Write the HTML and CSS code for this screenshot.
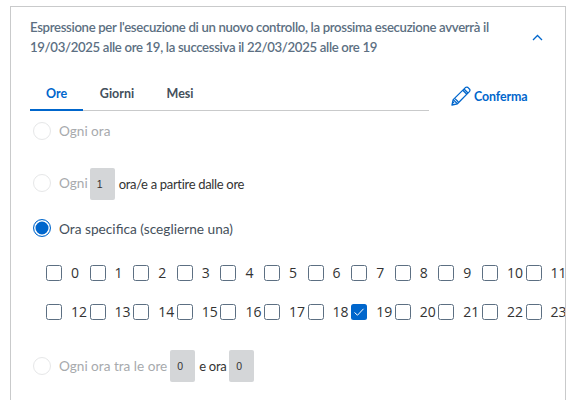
FILE: index.html
```html
<!DOCTYPE html>
<html lang="it">
<head>
<meta charset="utf-8">
<title>Espressione</title>
<link rel="stylesheet" href="styles.css">
</head>
<body>
<section class="card">
  <header class="head">
    <p class="desc">Espressione per l'esecuzione di un nuovo controllo, la prossima esecuzione avverrà il 19/03/2025 alle ore 19, la successiva il 22/03/2025 alle ore 19</p>
    <svg class="chev" width="11" height="7" viewBox="0 0 11 7"><path d="M1 6 L5.5 1.5 L10 6" fill="none" stroke="#0066cc" stroke-width="1.3"/></svg>
  </header>
  <div class="tabrow">
    <nav class="tabs">
      <a class="tab active">Ore</a>
      <a class="tab">Giorni</a>
      <a class="tab last">Mesi</a>
    </nav>
    <button class="confirm">
      <svg width="20" height="20" viewBox="0 0 20 20"><g fill="none" stroke="#0066cc" stroke-width="1.3" stroke-linejoin="round"><path d="M1 19 L2.2 13.6 L14.4 1.6 Q15.6 .6 16.8 1.4 L18.6 3.2 Q19.4 4.4 18.4 5.6 L6.4 17.8 Z"/><path d="M2.2 13.6 L6.4 17.8 M4 12.6 L7.4 16 M13 3 L17 7 M11.8 4.2 L15.8 8.2 M3 17 L1.8 15.8"/></g></svg>
      <span>Conferma</span>
    </button>
  </div>
  <div class="option o1"><span class="radio"></span><span class="lbl off">Ogni ora</span></div>
  <div class="option o2"><span class="radio raised"></span><span class="lbl off raised">Ogni</span><span class="num near">1</span><span class="lbl small">ora/e a partire dalle ore</span></div>
  <div class="option o3"><span class="radio on"></span><span class="lbl sel">Ora specifica (sceglierne una)</span></div>
  <div class="hours">
    <label class="hour"><i class="box"></i><span>0</span></label>
    <label class="hour"><i class="box"></i><span>1</span></label>
    <label class="hour"><i class="box"></i><span>2</span></label>
    <label class="hour"><i class="box"></i><span>3</span></label>
    <label class="hour"><i class="box"></i><span>4</span></label>
    <label class="hour"><i class="box"></i><span>5</span></label>
    <label class="hour"><i class="box"></i><span>6</span></label>
    <label class="hour"><i class="box"></i><span>7</span></label>
    <label class="hour"><i class="box"></i><span>8</span></label>
    <label class="hour"><i class="box"></i><span>9</span></label>
    <label class="hour"><i class="box"></i><span>10</span></label>
    <label class="hour"><i class="box"></i><span>11</span></label>
    <label class="hour"><i class="box"></i><span>12</span></label>
    <label class="hour"><i class="box"></i><span>13</span></label>
    <label class="hour"><i class="box"></i><span>14</span></label>
    <label class="hour"><i class="box"></i><span>15</span></label>
    <label class="hour"><i class="box"></i><span>16</span></label>
    <label class="hour"><i class="box"></i><span>17</span></label>
    <label class="hour"><i class="box"></i><span>18</span></label>
    <label class="hour"><i class="box checked"><svg width="16" height="16" viewBox="0 0 16 16"><path d="M3.5 8.5 L6.5 11.2 L12.5 4.8" fill="none" stroke="#fff" stroke-width="1"/></svg></i><span>19</span></label>
    <label class="hour"><i class="box"></i><span>20</span></label>
    <label class="hour"><i class="box"></i><span>21</span></label>
    <label class="hour"><i class="box"></i><span>22</span></label>
    <label class="hour"><i class="box"></i><span>23</span></label>
  </div>
  <div class="option o4"><span class="radio"></span><span class="lbl off">Ogni ora tra le ore</span><span class="num">0</span><span class="lbl small">e ora</span><span class="num">0</span></div>
</section>
</body>
</html>
```
FILE: styles.css
```css
html, body { margin: 0; padding: 0; height: 400px; overflow: hidden; background: #fff; }
body { font-family: "Lato", "Noto Sans", sans-serif; }
.card {
  box-sizing: border-box;
  width: 556px;
  height: 394px;
  margin: 6px 0 0 10px;
  border: 1px solid #c9cacb;
  border-bottom: 0;
  padding: 0 0 0 19px;
  overflow: hidden;
}
.head { display: flex; align-items: center; height: 49px; padding: 5px 0 1px; }
.desc { margin: 0; width: 470px; font-size: 13.2px; font-weight: 600; line-height: 20px; color: #5c6f82; letter-spacing: -.34px; }
.chev { margin-left: 32px; margin-top: 2px; }
.tabrow { display: flex; height: 49px; padding-top: 0; }
.tabs { display: flex; width: 399px; height: 49px; box-sizing: border-box; border-bottom: 1px solid #c9cacb; align-items: flex-end; }
.tab { box-sizing: border-box; height: 27px; padding: 0; font-size: 12.5px; line-height: 20px; font-weight: 700; color: #44505c; margin-bottom: -1px; text-align: center; width: 68px; }
.tab:first-child { width: 53px; }
.tab.last { width: 58px; }
.tab.active { color: #0066cc; border-bottom: 2px solid #0066cc; }
.confirm { display: flex; align-items: center; gap: 3px; height: 32px; margin: 18px 0 0 22px; padding: 0; border: 0; background: none; font: inherit; font-size: 12.4px; font-weight: 700; letter-spacing: -.1px; color: #0066cc; }
.option { display: flex; align-items: center; margin-left: 3px; color: #333; }
.o1 { height: 20px; margin-top: 10px; }
.o2 { height: 32px; margin-top: 27px; }
.o3 { height: 20px; margin-top: 18px; }
.o4 { height: 32px; margin-top: 19px; }
.radio { box-sizing: border-box; flex: none; width: 18px; height: 18px; border-radius: 50%; border: 1px solid #e6e7e8; background: #fff; margin-right: 8px; }
.radio.on { border: 1.5px solid #0066cc; box-shadow: inset 0 0 0 1.5px #fff, inset 0 0 0 8px #0066cc; }
.raised { margin-bottom: 3px; }
.lbl { font-size: 13.6px; white-space: nowrap; }
.lbl.off { color: #a7aaad; }
.lbl.sel { color: #45505b; font-size: 13.7px; }
.lbl.small { font-size: 13px; letter-spacing: -.32px; color: #333; margin-left: 4px; }
.num { box-sizing: border-box; width: 25px; height: 32px; margin-left: 3px; padding: 0 0 0 7px; background: #d4d6d8; border-radius: 2px; font: 10.5px/32px "Liberation Sans", sans-serif; color: #333; }
.num.near { margin-left: 2px; }
.hours { display: grid; grid-template-columns: repeat(12, 43.6px); grid-auto-rows: 39px; margin: 15px 0 0 16px; }
.hour { display: flex; align-items: center; font: 14px "Open Sans", sans-serif; color: #333; white-space: nowrap; height: 39px; }
.box { box-sizing: border-box; flex: none; display: block; width: 16px; height: 16px; border: 1px solid #5c6f82; border-radius: 2.5px; margin-right: 9px; }
.box.checked { background: #0066cc; border: 0; }
.box svg { display: block; }
```
